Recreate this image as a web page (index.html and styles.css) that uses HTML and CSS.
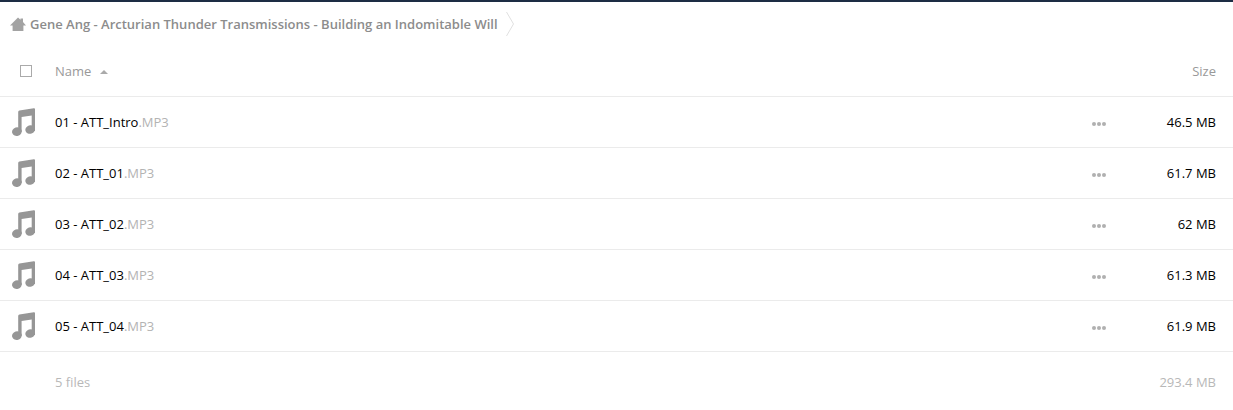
FILE: index.html
```html
<!DOCTYPE html>
<html lang="en">
<head>
<meta charset="UTF-8">
<title>Files</title>
<meta name="viewport" content="width=device-width,initial-scale=1">
<link rel="stylesheet" href="styles.css">
</head>
<body>
<!-- icons shared by the file rows -->
<svg class="sprite" aria-hidden="true">
	<symbol id="icon-audio" viewBox="0 0 24 28">
		<path d="M6.2 4Q6.2 2.800 7.400 2.600L21.800 .2Q23 0 23 1.200V23H19.700V7.400L9.600 9V24H6.200Z"/>
		<ellipse cx="4.900" cy="23.600" rx="4.900" ry="4.300" transform="rotate(-18 4.900 23.600)"/>
		<ellipse cx="18.200" cy="21.500" rx="4.900" ry="4.300" transform="rotate(-18 18.200 21.500)"/>
	</symbol>
	<symbol id="icon-more" viewBox="0 0 14 4">
		<circle cx="2" cy="2" r="2"/><circle cx="7" cy="2" r="2"/><circle cx="12" cy="2" r="2"/>
	</symbol>
</svg>

<header class="topbar"></header>

<nav class="breadcrumb">
	<a href="#" class="home" aria-label="Home">
		<svg width="16" height="15" viewBox="0 0 16 15"><path d="M8 .5L10.500 2.800V1.500H13V5L16 8.400H13.400V14H2.600V8.400H0Z"/></svg>
	</a>
	<a href="#" class="crumb">Gene Ang - Arcturian Thunder Transmissions - Building an Indomitable Will</a>
	<svg class="separator" width="8" height="24" viewBox="0 0 8 24"><path d="M.5 0L7.500 12L.5 24"/></svg>
</nav>

<table class="filelist">
	<thead>
		<tr>
			<th class="select"><input type="checkbox" id="selectAll" aria-label="Select all"></th>
			<th class="name"><a href="#">Name<span class="sort"></span></a></th>
			<th class="actions"></th>
			<th class="size"><a href="#">Size</a></th>
		</tr>
	</thead>
	<tbody>
		<tr>
			<td class="thumb"><svg width="24" height="28"><use href="#icon-audio"/></svg></td>
			<td class="name"><a href="#">01 - ATT_Intro<span class="extension">.MP3</span></a></td>
			<td class="actions"><button type="button" aria-label="More"><svg width="14" height="4"><use href="#icon-more"/></svg></button></td>
			<td class="size">46.5 MB</td>
		</tr>
		<tr>
			<td class="thumb"><svg width="24" height="28"><use href="#icon-audio"/></svg></td>
			<td class="name"><a href="#">02 - ATT_01<span class="extension">.MP3</span></a></td>
			<td class="actions"><button type="button" aria-label="More"><svg width="14" height="4"><use href="#icon-more"/></svg></button></td>
			<td class="size">61.7 MB</td>
		</tr>
		<tr>
			<td class="thumb"><svg width="24" height="28"><use href="#icon-audio"/></svg></td>
			<td class="name"><a href="#">03 - ATT_02<span class="extension">.MP3</span></a></td>
			<td class="actions"><button type="button" aria-label="More"><svg width="14" height="4"><use href="#icon-more"/></svg></button></td>
			<td class="size">62 MB</td>
		</tr>
		<tr>
			<td class="thumb"><svg width="24" height="28"><use href="#icon-audio"/></svg></td>
			<td class="name"><a href="#">04 - ATT_03<span class="extension">.MP3</span></a></td>
			<td class="actions"><button type="button" aria-label="More"><svg width="14" height="4"><use href="#icon-more"/></svg></button></td>
			<td class="size">61.3 MB</td>
		</tr>
		<tr>
			<td class="thumb"><svg width="24" height="28"><use href="#icon-audio"/></svg></td>
			<td class="name"><a href="#">05 - ATT_04<span class="extension">.MP3</span></a></td>
			<td class="actions"><button type="button" aria-label="More"><svg width="14" height="4"><use href="#icon-more"/></svg></button></td>
			<td class="size">61.9 MB</td>
		</tr>
	</tbody>
	<tfoot>
		<tr>
			<td></td>
			<td class="name">5 files</td>
			<td></td>
			<td class="size">293.4 MB</td>
		</tr>
	</tfoot>
</table>
</body>
</html>
```

FILE: styles.css
```css
*{
	box-sizing:border-box;
}

body{
	margin:0;
	background:#fff;
	color:#000;
	font-family:"Open Sans", sans-serif;
	font-size:13px;
	line-height:20px;
}

a{
	color:inherit;
	text-decoration:none;
}

svg{
	display:block;
}

.sprite{
	display:none;
}

.topbar{
	height:2px;
	background:#1d2d44;
}

/* breadcrumb */
.breadcrumb{
	display:flex;
	align-items:center;
	height:44px;
	padding-left:10px;
}

.home{
	margin-right:4px;
	fill:#a3a3a3;
}

.crumb{
	color:#8c8c8c;
	font-weight:600;
}

.separator{
	margin-left:8px;
	fill:none;
	stroke:#e0e0e0;
}

/* file table */
.filelist{
	width:100%;
	border-spacing:0;
	table-layout:fixed;
}

.filelist th,
.filelist tbody td{
	height:51px;
	border-bottom:1px solid #ebebeb;
}

.filelist th,
.filelist td{
	padding:0;
	text-align:left;
	font-weight:400;
}

.filelist th{
	color:#999;
}

.filelist .select{
	width:55px;
	padding-left:20px;
}

.select input{
	display:block;
	appearance:none;
	width:12px;
	height:12px;
	margin:0;
	border:1px solid #aaa;
	background:#fff;
}

.select input:checked{
	background:#aaa;
}

.sort{
	display:inline-block;
	margin:0 0 2px 9px;
	vertical-align:middle;
	border:4px solid transparent;
	border-top:0;
	border-bottom-color:#aaa;
}

.filelist .thumb{
	padding-left:12px;
	fill:#969696;
}

.extension{
	color:#b3b3b3;
}

.filelist .actions{
	width:40px;
}

.actions button{
	display:block;
	margin:0;
	padding:8px 6px 4px;
	border:0;
	background:none;
	fill:#b0b0b0;
	cursor:pointer;
}

.filelist .size{
	width:107px;
	padding-right:17px;
	text-align:right;
}

.filelist tfoot td{
	padding-top:20px;
	color:#b8b8b8;
}
```
